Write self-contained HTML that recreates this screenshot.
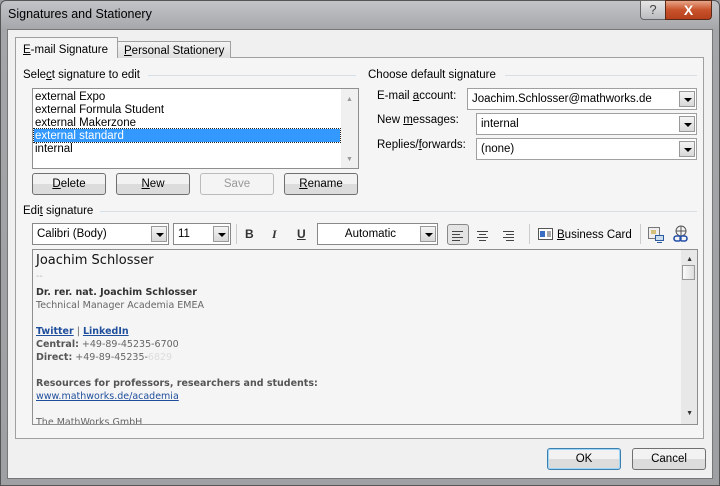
<!DOCTYPE html>
<html><head><meta charset="utf-8"><style>
*{margin:0;padding:0;box-sizing:border-box}
body{width:720px;height:486px;overflow:hidden;background:#9a9c9f;font-family:"Liberation Sans","DejaVu Sans",sans-serif;font-size:11.5px;color:#000;position:relative}
.a{position:absolute}
.title{left:0;top:0;width:720px;height:486px;background:linear-gradient(#c2c4c7,#a3a5a8 30px,#9ea0a3);border:1px solid #555;border-radius:6px 6px 0 0}
.client{left:7px;top:29px;width:706px;height:450px;background:#f0f0f0;border:1px solid #777}
.panel{left:15px;top:57px;width:689px;height:382px;background:#f5f5f5;border:1px solid #a0a0a0}
.btn{height:22px;border:1px solid #707070;border-radius:3px;background:linear-gradient(#f2f2f2 50%,#dcdcdc 50%);text-align:center;line-height:21px;font-size:11.5px}
.combo{height:22px;border:1px solid #a0a0a0;background:#fff;font-size:11.5px;line-height:21px;padding-left:4px}
.dd{position:absolute;right:1px;top:2px;width:16px;height:16px;border:1px solid #999;background:linear-gradient(#f4f4f4,#d8d8d8)}
.dd:after{content:"";position:absolute;left:4px;top:6px;border-left:4px solid transparent;border-right:4px solid transparent;border-top:4px solid #000}
.hl{height:1px;background:#d5dfe5}
.lbl{font-size:11.5px;white-space:nowrap}
u{text-decoration:underline}
.sig{font-family:"DejaVu Sans",sans-serif;font-size:9.5px;color:#666;white-space:nowrap}
.sig b{color:#555}
.lnk{color:#1f4e9c;text-decoration:underline;font-weight:bold}
</style></head><body>
<div class="a title"></div>
<div class="a" style="left:8px;top:7px;font-size:12.5px;color:#000">Signatures and Stationery</div>
<div class="a" style="left:640px;top:0;width:26px;height:20px;border:1px solid #666;border-radius:0 0 0 4px;background:linear-gradient(#e6e6e6,#b9bbbe);text-align:center;font-size:13px;color:#444;line-height:18px">?</div>
<div class="a" style="left:665px;top:0;width:47px;height:20px;border:1px solid #5a2a18;border-radius:0 0 4px 0;background:linear-gradient(#e7a588,#c8522a 50%,#b5401c);text-align:center;color:#fff;font-weight:bold;font-size:14px;line-height:18px">X</div>
<div class="a client"></div>
<div class="a panel"></div>
<div class="a" style="left:15px;top:37px;width:103px;height:21px;background:#f5f5f5;border:1px solid #a0a0a0;border-bottom:none;font-size:11.5px;padding:6px 0 0 7px"><u>E</u>-mail Signature</div>
<div class="a" style="left:117px;top:41px;width:114px;height:17px;background:linear-gradient(#f4f4f4,#dedede);border:1px solid #a0a0a0;border-bottom:none;font-size:11.5px;padding:3px 0 0 6px"><u>P</u>ersonal Stationery</div>

<div class="a lbl" style="left:23px;top:69px">Sele<u>c</u>t signature to edit</div>
<div class="a hl" style="left:148px;top:75px;width:208px"></div>
<div class="a" style="left:32px;top:88px;width:327px;height:81px;background:#fff;border:1px solid #8e8f8f"></div>
<div class="a" style="left:341px;top:89px;width:17px;height:79px;background:#f0f0f0"></div>
<div class="a" style="left:346px;top:96px;color:#999;font-size:7px">▲</div>
<div class="a" style="left:346px;top:156px;color:#999;font-size:7px">▼</div>
<div class="a lbl" style="left:35px;top:91px;line-height:13px">external Expo<br>external Formula Student<br>external Makerzone</div>
<div class="a lbl" style="left:34px;top:129px;width:306px;height:13px;background:#3399ff;color:#fff;line-height:14px;padding-left:1px;outline:1px dotted #222">external standard</div>
<div class="a lbl" style="left:35px;top:143px;line-height:13px">internal</div>
<div class="a btn" style="left:32px;top:173px;width:74px"><u>D</u>elete</div>
<div class="a btn" style="left:116px;top:173px;width:74px"><u>N</u>ew</div>
<div class="a btn" style="left:200px;top:173px;width:74px;border-color:#bbb;background:#f4f4f4;color:#999">Save</div>
<div class="a btn" style="left:284px;top:173px;width:74px"><u>R</u>ename</div>

<div class="a lbl" style="left:368px;top:69px">Choose default signature</div>
<div class="a hl" style="left:505px;top:75px;width:192px"></div>
<div class="a lbl" style="left:377px;top:90px">E-mail <u>a</u>ccount:</div>
<div class="a combo" style="left:467px;top:88px;width:230px">Joachim.Schlosser@mathworks.de<div class="dd"></div></div>
<div class="a lbl" style="left:377px;top:114px">New <u>m</u>essages:</div>
<div class="a combo" style="left:476px;top:113px;width:221px">internal<div class="dd"></div></div>
<div class="a lbl" style="left:377px;top:139px">Replies/<u>f</u>orwards:</div>
<div class="a combo" style="left:476px;top:138px;width:221px">(none)<div class="dd"></div></div>

<div class="a lbl" style="left:23px;top:205px">Edi<u>t</u> signature</div>
<div class="a hl" style="left:100px;top:211px;width:597px"></div>
<div class="a combo" style="left:32px;top:223px;width:137px;border-color:#888">Calibri (Body)<div class="dd"></div></div>
<div class="a combo" style="left:173px;top:223px;width:58px;border-color:#888">11<div class="dd"></div></div>
<div class="a" style="left:236px;top:224px;width:1px;height:20px;background:#ccc"></div>
<div class="a" style="left:245px;top:227px;font-weight:bold;font-size:12px;color:#333">B</div>
<div class="a" style="left:272px;top:227px;font-style:italic;font-weight:bold;font-size:12px;color:#333;font-family:'Liberation Serif',serif">I</div>
<div class="a" style="left:297px;top:227px;font-weight:bold;font-size:12px;color:#333;text-decoration:underline">U</div>
<div class="a combo" style="left:317px;top:223px;width:121px;border-color:#888;text-align:center;padding-right:18px">Automatic<div class="dd"></div></div>
<div class="a" style="left:447px;top:224px;width:22px;height:21px;border:1px solid #888;border-radius:3px;background:#e4e4e4"></div>
<svg class="a" style="left:447px;top:224px" width="80" height="22"><g stroke="#444" stroke-width="1"><path d="M5 7.5h11M5 10.5h8M5 13.5h11M5 16.5h8"/><path d="M30 7.5h11M32 10.5h7M30 13.5h11M32 16.5h7"/><path d="M56 7.5h11M59 10.5h8M56 13.5h11M59 16.5h8"/></g></svg>
<div class="a" style="left:529px;top:224px;width:1px;height:20px;background:#ccc"></div>
<svg class="a" style="left:538px;top:228px" width="16" height="13"><rect x="0.5" y="0.5" width="14" height="11" fill="#fff" stroke="#555"/><rect x="2" y="3" width="5" height="6" fill="#3a6fc4"/><path d="M9 4h4M9 6h4M9 8h4" stroke="#555"/></svg>
<div class="a lbl" style="left:557px;top:229px"><u>B</u>usiness Card</div>
<div class="a" style="left:640px;top:224px;width:1px;height:20px;background:#ccc"></div>
<svg class="a" style="left:647px;top:226px" width="18" height="18"><rect x="1.5" y="1.5" width="11" height="11" fill="#eee" stroke="#777"/><rect x="4" y="4" width="5" height="4" fill="#d7c07a"/><rect x="8.5" y="9.5" width="8" height="5" fill="#cde" stroke="#2a5aa0"/><path d="M10 16.5h5" stroke="#2a5aa0"/></svg>
<svg class="a" style="left:672px;top:225px" width="18" height="20"><circle cx="9" cy="6" r="5" fill="none" stroke="#555"/><path d="M4 6h10M9 1v10" stroke="#555"/><rect x="2" y="11" width="7" height="5" rx="2.5" fill="none" stroke="#2450a8" stroke-width="1.6"/><rect x="8" y="11" width="7" height="5" rx="2.5" fill="none" stroke="#2450a8" stroke-width="1.6"/></svg>

<div class="a" style="left:32px;top:249px;width:666px;height:176px;background:#f5f5f5;border:1px solid #8e8f8f;overflow:hidden">
<div class="a" style="right:0;top:0;width:16px;height:174px;background:#e8e8e8"></div>
<div class="a" style="right:2px;top:15px;width:13px;height:15px;border:1px solid #999;background:linear-gradient(90deg,#fafafa,#ddd)"></div>
<div class="a" style="right:4px;top:6px;font-size:7px;color:#333">▲</div>
<div class="a" style="right:4px;top:160px;font-size:7px;color:#333">▼</div>
<div class="a" style="left:3px;top:3px;font-size:13px;font-family:'DejaVu Sans',sans-serif;color:#111">Joachim Schlosser</div>
<div class="a sig" style="left:3px;top:21px;color:#bbb">--</div>
<div class="a sig" style="left:3px;top:37px"><b style="color:#333">Dr. rer. nat. Joachim Schlosser</b></div>
<div class="a sig" style="left:3px;top:50px">Technical Manager Academia EMEA</div>
<div class="a sig" style="left:3px;top:76px"><span class="lnk">Twitter</span> | <span class="lnk">LinkedIn</span></div>
<div class="a sig" style="left:3px;top:89px"><b>Central:</b> +49-89-45235-6700</div>
<div class="a sig" style="left:3px;top:102px"><b>Direct:</b> +49-89-45235-<span style="color:#ddd">6829</span></div>
<div class="a sig" style="left:3px;top:128px"><b>Resources for professors, researchers and students:</b></div>
<div class="a sig" style="left:3px;top:141px"><span style="color:#1f4e9c;text-decoration:underline">www.mathworks.de/academia</span></div>
<div class="a sig" style="left:3px;top:167px">The MathWorks GmbH</div>
</div>

<div class="a btn" style="left:547px;top:448px;width:74px;border-color:#3c7fb1;box-shadow:inset 0 0 0 1px #9fd4f5">OK</div>
<div class="a btn" style="left:632px;top:448px;width:74px">Cancel</div>
</body></html>
